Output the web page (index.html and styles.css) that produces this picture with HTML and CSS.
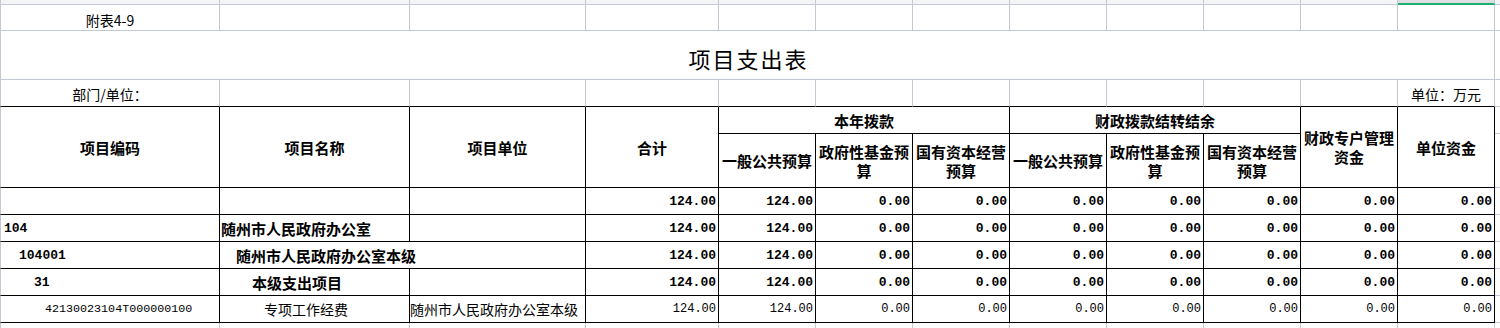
FILE: index.html
```html
<!DOCTYPE html>
<html lang="zh-CN">
<head>
<meta charset="utf-8">
<title>项目支出表</title>
<link rel="stylesheet" href="styles.css">
</head>
<body>
<div class="sheet">
  <div class="ch first"></div>
  <div class="ch"></div>
  <div class="ch"></div>
  <div class="ch"></div>
  <div class="ch"></div>
  <div class="ch"></div>
  <div class="ch"></div>
  <div class="ch"></div>
  <div class="ch"></div>
  <div class="ch"></div>
  <div class="ch"></div>
  <div class="ch sel"></div>
  <div class="ch last"></div>

  <div class="c first ctr note">附表4-9</div>
  <div class="c"></div><div class="c"></div><div class="c"></div><div class="c"></div>
  <div class="c"></div><div class="c"></div><div class="c"></div><div class="c"></div>
  <div class="c"></div><div class="c"></div><div class="c"></div>
  <div class="c last"></div>

  <div class="c first ctr title span12">项目支出表</div>
  <div class="c last"></div>

  <div class="c first ctr unit bb">部门/单位：</div>
  <div class="c bb"></div><div class="c bb"></div><div class="c bb"></div><div class="c bb"></div>
  <div class="c bb"></div><div class="c bb"></div><div class="c bb"></div><div class="c bb"></div>
  <div class="c bb"></div><div class="c bb"></div>
  <div class="c ctr unit bb">单位：万元</div>
  <div class="c last"></div>

  <div class="c first t hd rs2">项目编码</div>
  <div class="c t hd rs2">项目名称</div>
  <div class="c t hd rs2">项目单位</div>
  <div class="c t hd rs2">合计</div>
  <div class="c t hd cs3">本年拨款</div>
  <div class="c t hd cs3">财政拨款结转结余</div>
  <div class="c t hd rs2">财政专户管理<br>资金</div>
  <div class="c t hd rs2">单位资金</div>
  <div class="c last"></div>
  <div class="c t hd">一般公共预算</div>
  <div class="c t hd">政府性基金预<br>算</div>
  <div class="c t hd">国有资本经营<br>预算</div>
  <div class="c t hd">一般公共预算</div>
  <div class="c t hd">政府性基金预<br>算</div>
  <div class="c t hd">国有资本经营<br>预算</div>
  <div class="c last"></div>

  <div class="c first t"></div>
  <div class="c t"></div>
  <div class="c t"></div>
  <div class="c t num b">124.00</div>
  <div class="c t num b">124.00</div>
  <div class="c t num b">0.00</div>
  <div class="c t num b">0.00</div>
  <div class="c t num b">0.00</div>
  <div class="c t num b">0.00</div>
  <div class="c t num b">0.00</div>
  <div class="c t num b">0.00</div>
  <div class="c t num b">0.00</div>
  <div class="c last"></div>

  <div class="c first t code b l0">104</div>
  <div class="c t name b n0">随州市人民政府办公室</div>
  <div class="c t"></div>
  <div class="c t num b">124.00</div>
  <div class="c t num b">124.00</div>
  <div class="c t num b">0.00</div>
  <div class="c t num b">0.00</div>
  <div class="c t num b">0.00</div>
  <div class="c t num b">0.00</div>
  <div class="c t num b">0.00</div>
  <div class="c t num b">0.00</div>
  <div class="c t num b">0.00</div>
  <div class="c last"></div>

  <div class="c first t code b l1">104001</div>
  <div class="c t name b n1 cs2">随州市人民政府办公室本级</div>
  <div class="c t num b">124.00</div>
  <div class="c t num b">124.00</div>
  <div class="c t num b">0.00</div>
  <div class="c t num b">0.00</div>
  <div class="c t num b">0.00</div>
  <div class="c t num b">0.00</div>
  <div class="c t num b">0.00</div>
  <div class="c t num b">0.00</div>
  <div class="c t num b">0.00</div>
  <div class="c last"></div>

  <div class="c first t code b l2">31</div>
  <div class="c t name b n2">本级支出项目</div>
  <div class="c t"></div>
  <div class="c t num b">124.00</div>
  <div class="c t num b">124.00</div>
  <div class="c t num b">0.00</div>
  <div class="c t num b">0.00</div>
  <div class="c t num b">0.00</div>
  <div class="c t num b">0.00</div>
  <div class="c t num b">0.00</div>
  <div class="c t num b">0.00</div>
  <div class="c t num b">0.00</div>
  <div class="c last"></div>

  <div class="c first t code sm l3">42130023104T000000100</div>
  <div class="c t name sm n3">专项工作经费</div>
  <div class="c t name sm u">随州市人民政府办公室本级</div>
  <div class="c t num sm">124.00</div>
  <div class="c t num sm">124.00</div>
  <div class="c t num sm">0.00</div>
  <div class="c t num sm">0.00</div>
  <div class="c t num sm">0.00</div>
  <div class="c t num sm">0.00</div>
  <div class="c t num sm">0.00</div>
  <div class="c t num sm">0.00</div>
  <div class="c t num sm">0.00</div>
  <div class="c last"></div>

  <div class="c first"></div>
  <div class="c"></div><div class="c"></div><div class="c"></div><div class="c"></div>
  <div class="c"></div><div class="c"></div><div class="c"></div><div class="c"></div>
  <div class="c"></div><div class="c"></div><div class="c"></div>
  <div class="c last"></div>
</div>
</body>
</html>
```
FILE: styles.css
```css
html, body {
  margin: 0;
  padding: 0;
  overflow: hidden;
  background: #ffffff;
}

body {
  font-family: "Noto Sans CJK SC", "Noto Sans", sans-serif;
  color: #000000;
  font-size: 14px;
}

.sheet {
  display: grid;
  width: 1500px;
  height: 328px;
  overflow: hidden;
  grid-template-columns: 220px 190px 176px 133px repeat(8, 97px) 5px;
  grid-template-rows: 5px 26px 49px 27px 27px 54px repeat(5, 27px) 6px;
}

/* spreadsheet column header strip (cut off at top) */
.ch {
  box-sizing: border-box;
  background: #f3f4f6;
  border-right: 1px solid #c3c8d6;
  border-bottom: 1px solid #c3c8d6;
}
.ch.first { border-left: 1px solid #c3c8d6; }
.ch.sel {
  background: #dcdee2;
  border-bottom: 2px solid #1fae72;
}
.ch.last { border-right: none; }

/* cells */
.c {
  box-sizing: border-box;
  border-right: 1px solid #c3c8d6;
  border-bottom: 1px solid #c3c8d6;
  display: flex;
  align-items: center;
  overflow: hidden;
  white-space: nowrap;
  min-width: 0;
}
.c.first { border-left: 1px solid #c3c8d6; }
.c.last { border-right: none; }
.c.bb { border-bottom-color: #000000; }
.c.t {
  border-right-color: #000000;
  border-bottom-color: #000000;
}

.ctr { justify-content: center; }

.note {
  font-size: 14px;
  padding-top: 4px;
}

.span12 { grid-column: span 12; }
.cs2 { grid-column: span 2; }

.title {
  font-size: 22px;
  letter-spacing: 2px;
  padding-top: 6px;
  padding-left: 2px;
}

.unit {
  font-size: 14px;
  padding-top: 1px;
}

.hd {
  justify-content: center;
  text-align: center;
  font-weight: 700;
  font-size: 15px;
  line-height: 19px;
  white-space: normal;
}
.rs2 { grid-row: span 2; }
.cs3 { grid-column: span 3; }

.num {
  justify-content: flex-end;
  padding-right: 2px;
  font-family: "Liberation Mono", monospace;
  font-size: 13px;
}
.num.sm { font-size: 12px; }

.b { font-weight: 700; }

.code {
  font-family: "Liberation Mono", monospace;
  font-size: 13px;
}
.code.sm { font-size: 11.7px; }

.name { font-size: 15px; }
.name.sm { font-size: 14px; }

.l0 { padding-left: 3px; }
.l1 { padding-left: 18px; }
.l2 { padding-left: 33px; }
.l3 { padding-left: 44px; }

.n0 { padding-left: 1px; }
.n1 { padding-left: 16px; }
.n2 { padding-left: 32px; }
.n3 { padding-left: 44px; }
.u { padding-left: 0; }
```
